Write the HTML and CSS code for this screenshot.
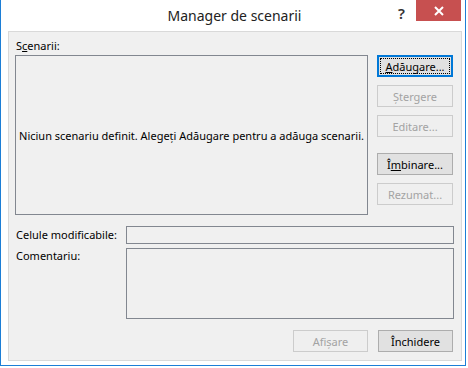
FILE: index.html
```html
<!DOCTYPE html>
<html lang="ro">
<head>
  <meta charset="UTF-8" />
  <title>Manager de scenarii</title>
  <link rel="stylesheet" href="styles.css">
</head>
<body>
  <div class="window">
    <div class="titlebar">
      <div class="title">Manager de scenarii</div>
      <div class="help">?</div>
      <div class="close">
        <svg width="12" height="10" viewBox="0 0 12 10">
          <path d="M2 1 L10 9 M10 1 L2 9" stroke="#fff" stroke-width="2" fill="none"/>
        </svg>
      </div>
    </div>

    <div class="panel">
      <div class="top">
        <div class="list-col">
          <div class="label">S<u>c</u>enarii:</div>
          <div class="listbox">Niciun scenariu definit. Alegeți Adăugare pentru a adăuga scenarii.</div>
        </div>
        <div class="buttons">
          <div class="btn default"><span class="focus"><u>A</u>dăugare...</span></div>
          <div class="btn disabled">Ștergere</div>
          <div class="btn disabled">Editare...</div>
          <div class="btn spaced">Î<u>m</u>binare...</div>
          <div class="btn disabled">Rezumat...</div>
        </div>
      </div>

      <div class="field-row first">
        <div class="field-label">Celule modificabile:</div>
        <div class="input"></div>
      </div>
      <div class="field-row">
        <div class="field-label comment">Comentariu:</div>
        <div class="textarea"></div>
      </div>

      <div class="footer">
        <div class="btn disabled wide">Afișare</div>
        <div class="btn wide">Închidere</div>
      </div>
    </div>
  </div>
</body>
</html>
```

FILE: styles.css
```css
:root {
  --frame: #1c7ed6;
  --panel: #f0f0f0;
  --field: #828790;
  --text: #000;
  --muted: #a3a3a3;
}

body {
  margin: 0;
  background: #fff;
  font-family: 'Noto Sans', 'Open Sans', sans-serif;
  font-size: 11px;
  color: var(--text);
}

.window {
  width: 466px;
  height: 366px;
  box-sizing: border-box;
  border: 1px solid var(--frame);
  border-top: none;
  background: #fff;
  display: flex;
  flex-direction: column;
}

.titlebar {
  height: 31px;
  position: relative;
  display: flex;
  align-items: center;
  justify-content: center;
}

.title {
  font-size: 14px;
  color: #222;
  margin-top: -1px;
  margin-left: 3px;
}

.help {
  position: absolute;
  left: 397px;
  top: 3px;
  font-size: 15px;
  font-weight: 600;
  color: #333;
}

.close {
  position: absolute;
  left: 415px;
  top: 0;
  width: 45px;
  height: 21px;
  background: #c75050;
  display: flex;
  align-items: center;
  justify-content: center;
}

.panel {
  margin: 0 3px 4px 7px;
  flex: 1;
  border: 1px solid #d9d9d9;
  background: var(--panel);
  padding: 6px 7px 0 6px;
  display: flex;
  flex-direction: column;
}

.top {
  display: flex;
  gap: 9px;
}

.list-col {
  width: 353px;
}

.label {
  height: 17px;
  line-height: 16px;
  padding-left: 1px;
}

.listbox {
  height: 160px;
  box-sizing: border-box;
  border: 1px solid var(--field);
  display: flex;
  align-items: center;
  justify-content: center;
  white-space: nowrap;
}

.buttons {
  padding-top: 17px;
  display: flex;
  flex-direction: column;
  gap: 8px;
}

.btn {
  width: 76px;
  height: 22px;
  box-sizing: border-box;
  border: 1px solid #adadad;
  background: #e1e1e1;
  display: flex;
  align-items: center;
  justify-content: center;
}

.btn.default {
  border: 2px solid #0078d7;
  padding: 1px;
}

.focus {
  flex: 1;
  align-self: stretch;
  border: 1px dotted #000;
  display: flex;
  align-items: center;
  justify-content: center;
}

.btn.disabled {
  border-color: #cccccc;
  background: #efefef;
  color: var(--muted);
}

.btn.spaced {
  margin-top: 8px;
}

.field-row {
  display: flex;
  margin-top: 4px;
}

.field-row.first {
  margin-top: 11px;
}

.field-label {
  width: 110px;
  padding-left: 1px;
  line-height: 18px;
  white-space: nowrap;
}

.field-label.comment {
  line-height: 16px;
}

.input {
  width: 328px;
  height: 18px;
  box-sizing: border-box;
  border: 1px solid var(--field);
}

.textarea {
  width: 328px;
  height: 71px;
  box-sizing: border-box;
  border: 1px solid var(--field);
}

.footer {
  margin-top: 11px;
  width: 438px;
  display: flex;
  justify-content: flex-end;
  gap: 10px;
}

.btn.wide {
  width: 75px;
}
```
